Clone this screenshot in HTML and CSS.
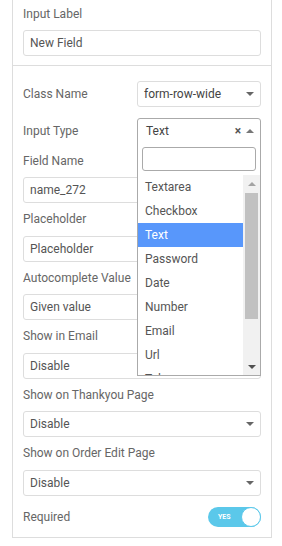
FILE: index.html
```html
<!DOCTYPE html>
<html lang="en">
  <head>
    <meta charset="UTF-8" />
    <meta name="viewport" content="width=device-width, initial-scale=1.0" />
    <title>Field settings</title>
    <link rel="stylesheet" href="styles.css">
  </head>
  <body>
    <div class="panel">
      <div class="section top">
        <label class="label">Input Label</label>
        <div class="input">New Field</div>
      </div>

      <div class="section">
        <div class="row">
          <label class="label">Class Name</label>
          <div class="select small">
            <span>form-row-wide</span>
            <i class="arrow down"></i>
          </div>
        </div>

        <div class="row">
          <label class="label">Input Type</label>
          <div class="select small open">
            <span>Text</span>
            <b class="clear">&times;</b>
            <i class="arrow up"></i>

            <div class="dropdown">
              <div class="search"><input type="text" /></div>
              <div class="options">
                <ul class="list">
                  <li>Textarea</li>
                  <li>Checkbox</li>
                  <li class="active">Text</li>
                  <li>Password</li>
                  <li>Date</li>
                  <li>Number</li>
                  <li>Email</li>
                  <li>Url</li>
                  <li>Tel</li>
                </ul>
                <div class="scrollbar">
                  <div class="btn"><i class="tri up"></i></div>
                  <div class="track"><div class="thumb"></div></div>
                  <div class="btn"><i class="tri down"></i></div>
                </div>
              </div>
            </div>
          </div>
        </div>

        <div class="field">
          <label class="label">Field Name</label>
          <div class="input">name_272</div>
        </div>
        <div class="field">
          <label class="label">Placeholder</label>
          <div class="input">Placeholder</div>
        </div>
        <div class="field">
          <label class="label">Autocomplete Value</label>
          <div class="input">Given value</div>
        </div>
        <div class="field">
          <label class="label">Show in Email</label>
          <div class="select">
            <span>Disable</span>
            <i class="arrow down"></i>
          </div>
        </div>
        <div class="field">
          <label class="label">Show on Thankyou Page</label>
          <div class="select">
            <span>Disable</span>
            <i class="arrow down"></i>
          </div>
        </div>
        <div class="field">
          <label class="label">Show on Order Edit Page</label>
          <div class="select">
            <span>Disable</span>
            <i class="arrow down"></i>
          </div>
        </div>

        <div class="row last">
          <label class="label">Required</label>
          <div class="toggle">
            <span>YES</span>
            <i class="knob"></i>
          </div>
        </div>
      </div>
    </div>
  </body>
</html>
```

FILE: styles.css
```css
* {
  margin: 0;
  padding: 0;
  box-sizing: border-box;
  font-family: Roboto, Arial, sans-serif;
}

body {
  background: #fff;
}

.panel {
  margin: 0 0 0 12px;
  width: 260px;
  border: 1px solid #ddd;
  border-top: none;
  background: #fff;
}

.section {
  padding: 15px 10px 10px;
}

.section.top {
  padding: 6px 10px 9px;
  border-bottom: 1px solid #ddd;
}

.label {
  display: block;
  font-size: 12px;
  line-height: 16px;
  color: #666;
}

.input,
.select {
  position: relative;
  height: 26px;
  border: 1px solid #ddd;
  border-radius: 3px;
  padding: 0 6px;
  font-size: 12px;
  line-height: 24px;
  color: #555;
  background: #fff;
}

.top .label {
  margin-bottom: 8px;
}

.field .label {
  margin-bottom: 8.5px;
}

.field {
  margin-bottom: 8px;
}

.row {
  display: flex;
  align-items: center;
  justify-content: space-between;
  margin-bottom: 11px;
}

.row + .row {
  margin-bottom: 8.5px;
}

.row.last {
  margin: 11px 0 0;
}

.select.small {
  width: 124px;
  color: #444;
}

.select.open span {
  padding-left: 2px;
}

.arrow {
  position: absolute;
  right: 6px;
  top: 10px;
  border: 4px solid transparent;
  border-top-color: #666;
  border-bottom: none;
  width: 0;
  height: 0;
}

.arrow.up {
  border-top: none;
  border-bottom: 4px solid #777;
  top: 10px;
}

.clear {
  position: absolute;
  right: 19px;
  top: 0;
  font-size: 12px;
  color: #555;
}

.select.open {
  border-color: #aaa;
  border-radius: 3px 3px 0 0;
}

.dropdown {
  position: absolute;
  left: -1px;
  right: -1px;
  top: 100%;
  border: 1px solid #aaa;
  border-top: none;
  background: #fff;
  z-index: 2;
}

.search {
  padding: 4px;
}

.search input {
  display: block;
  width: 100%;
  height: 24px;
  border: 1px solid #aaa;
  border-radius: 3px;
  outline: none;
}

.options {
  display: flex;
  height: 200px;
  overflow: hidden;
}

.list {
  flex: 1;
  list-style: none;
}

.list li {
  height: 24px;
  line-height: 24px;
  padding: 0 7px;
  font-size: 12px;
  color: #555;
}

.list li.active {
  background: #5897fb;
  color: #fff;
}

.scrollbar {
  width: 17px;
  display: flex;
  flex-direction: column;
  background: #f1f1f1;
}

.scrollbar .btn {
  height: 17px;
  display: flex;
  align-items: center;
  justify-content: center;
}

.scrollbar .track {
  flex: 1;
  padding: 1px 2px;
}

.scrollbar .thumb {
  height: 126px;
  background: #c1c1c1;
}

.tri {
  width: 0;
  height: 0;
  border: 4px solid transparent;
}

.tri.up {
  border-top: none;
  border-bottom: 4px solid #a3a3a3;
}

.tri.down {
  border-bottom: none;
  border-top: 4px solid #505050;
}

.toggle {
  position: relative;
  width: 53px;
  height: 20px;
  border-radius: 10px;
  background: #5bc8ea;
}

.toggle span {
  position: absolute;
  left: 10px;
  top: 0;
  line-height: 20px;
  font-size: 7px;
  font-weight: 700;
  color: #fff;
}

.toggle .knob {
  position: absolute;
  right: 0;
  top: 0;
  width: 20px;
  height: 20px;
  border-radius: 50%;
  background: #fff;
  border: 1px solid #5bc8ea;
}
```
